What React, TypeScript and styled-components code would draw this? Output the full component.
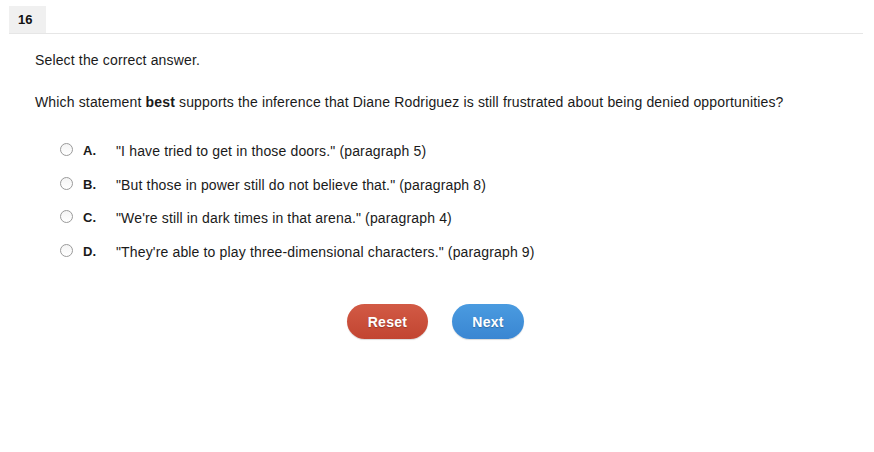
import styled, { createGlobalStyle } from "styled-components";

/////////////////////////////////////////////////////////////////////////////STYLE
const GlobalStyle = createGlobalStyle`
  html, body {
    margin: 0;
    padding: 0;
    background: #ffffff;
  }
  body {
    font-family: "Liberation Sans", Arial, sans-serif;
    color: #1a1a1a;
  }
`;

const Page = styled.div`
  width: 874px;
  height: 452px;
  padding: 6px 11px 0 9px;
  box-sizing: border-box;
`;

const Header = styled.div`
  display: flex;
  align-items: flex-end;
  border-bottom: 1px solid #e6e6e6;
`;

const NumberTab = styled.div`
  width: 37px;
  height: 27px;
  background: #f0f0f0;
  font-size: 13px;
  font-weight: bold;
  display: flex;
  align-items: center;
  padding-left: 9px;
  box-sizing: border-box;
  color: #111;
`;

const Body = styled.div`
  padding: 18px 0 0 26px;
  font-size: 14px;
  line-height: 16px;
  letter-spacing: 0.15px;
`;

const Instruction = styled.p`
  margin: 0 0 26px;
`;

const Question = styled.p`
  margin: 0 0 33px;
`;

const Options = styled.div`
  display: flex;
  flex-direction: column;
  gap: 17.7px;
  padding-left: 25px;
`;

const Option = styled.label`
  display: flex;
  align-items: center;
  height: 16px;
  cursor: pointer;
`;

const Radio = styled.span`
  width: 11px;
  height: 11px;
  border: 1px solid #9a9a9a;
  border-radius: 50%;
  background: linear-gradient(#f4f4f4, #ffffff);
  margin-right: 10px;
  margin-top: -3px;
  flex-shrink: 0;
`;

const Letter = styled.span`
  width: 33px;
  font-weight: bold;
  font-size: 13px;
  letter-spacing: 0;
`;

const Actions = styled.div`
  display: flex;
  justify-content: center;
  gap: 24px;
  margin-top: 44px;
  padding-right: 27px;
`;

const Button = styled.button<{ tone: "red" | "blue" }>`
  height: 35px;
  border: none;
  border-radius: 18px;
  font-family: "Liberation Sans", Arial, sans-serif;
  font-size: 14px;
  font-weight: bold;
  letter-spacing: 0.3px;
  color: #ffffff;
  cursor: pointer;
  text-shadow: 0 1px 1px rgba(0, 0, 0, 0.25);
  padding: 0;
  width: ${({ tone }) => (tone === "red" ? "81px" : "72px")};
  background: ${({ tone }) =>
    tone === "red"
      ? "linear-gradient(#d25a45, #c24531)"
      : "linear-gradient(#4a9be0, #3a86d2)"};
  box-shadow: 0 1px 1px rgba(0, 0, 0, 0.15);
`;

const options = [
  { letter: "A.", text: "\"I have tried to get in those doors.\" (paragraph 5)" },
  { letter: "B.", text: "\"But those in power still do not believe that.\" (paragraph 8)" },
  { letter: "C.", text: "\"We're still in dark times in that arena.\" (paragraph 4)" },
  { letter: "D.", text: "\"They're able to play three-dimensional characters.\" (paragraph 9)" },
];

/////////////////////////////////////////////////////////////////////////////COMPONENT
function App() {
  return (
    <>
      <GlobalStyle />
      <Page>
        <Header>
          <NumberTab>16</NumberTab>
        </Header>
        <Body>
          <Instruction>Select the correct answer.</Instruction>
          <Question>
            Which statement <b>best</b> supports the inference that Diane
            Rodriguez is still frustrated about being denied opportunities?
          </Question>
          <Options>
            {options.map((o) => (
              <Option key={o.letter}>
                <Radio />
                <Letter>{o.letter}</Letter>
                <span>{o.text}</span>
              </Option>
            ))}
          </Options>
          <Actions>
            <Button tone="red">Reset</Button>
            <Button tone="blue">Next</Button>
          </Actions>
        </Body>
      </Page>
    </>
  );
}

export default App;
